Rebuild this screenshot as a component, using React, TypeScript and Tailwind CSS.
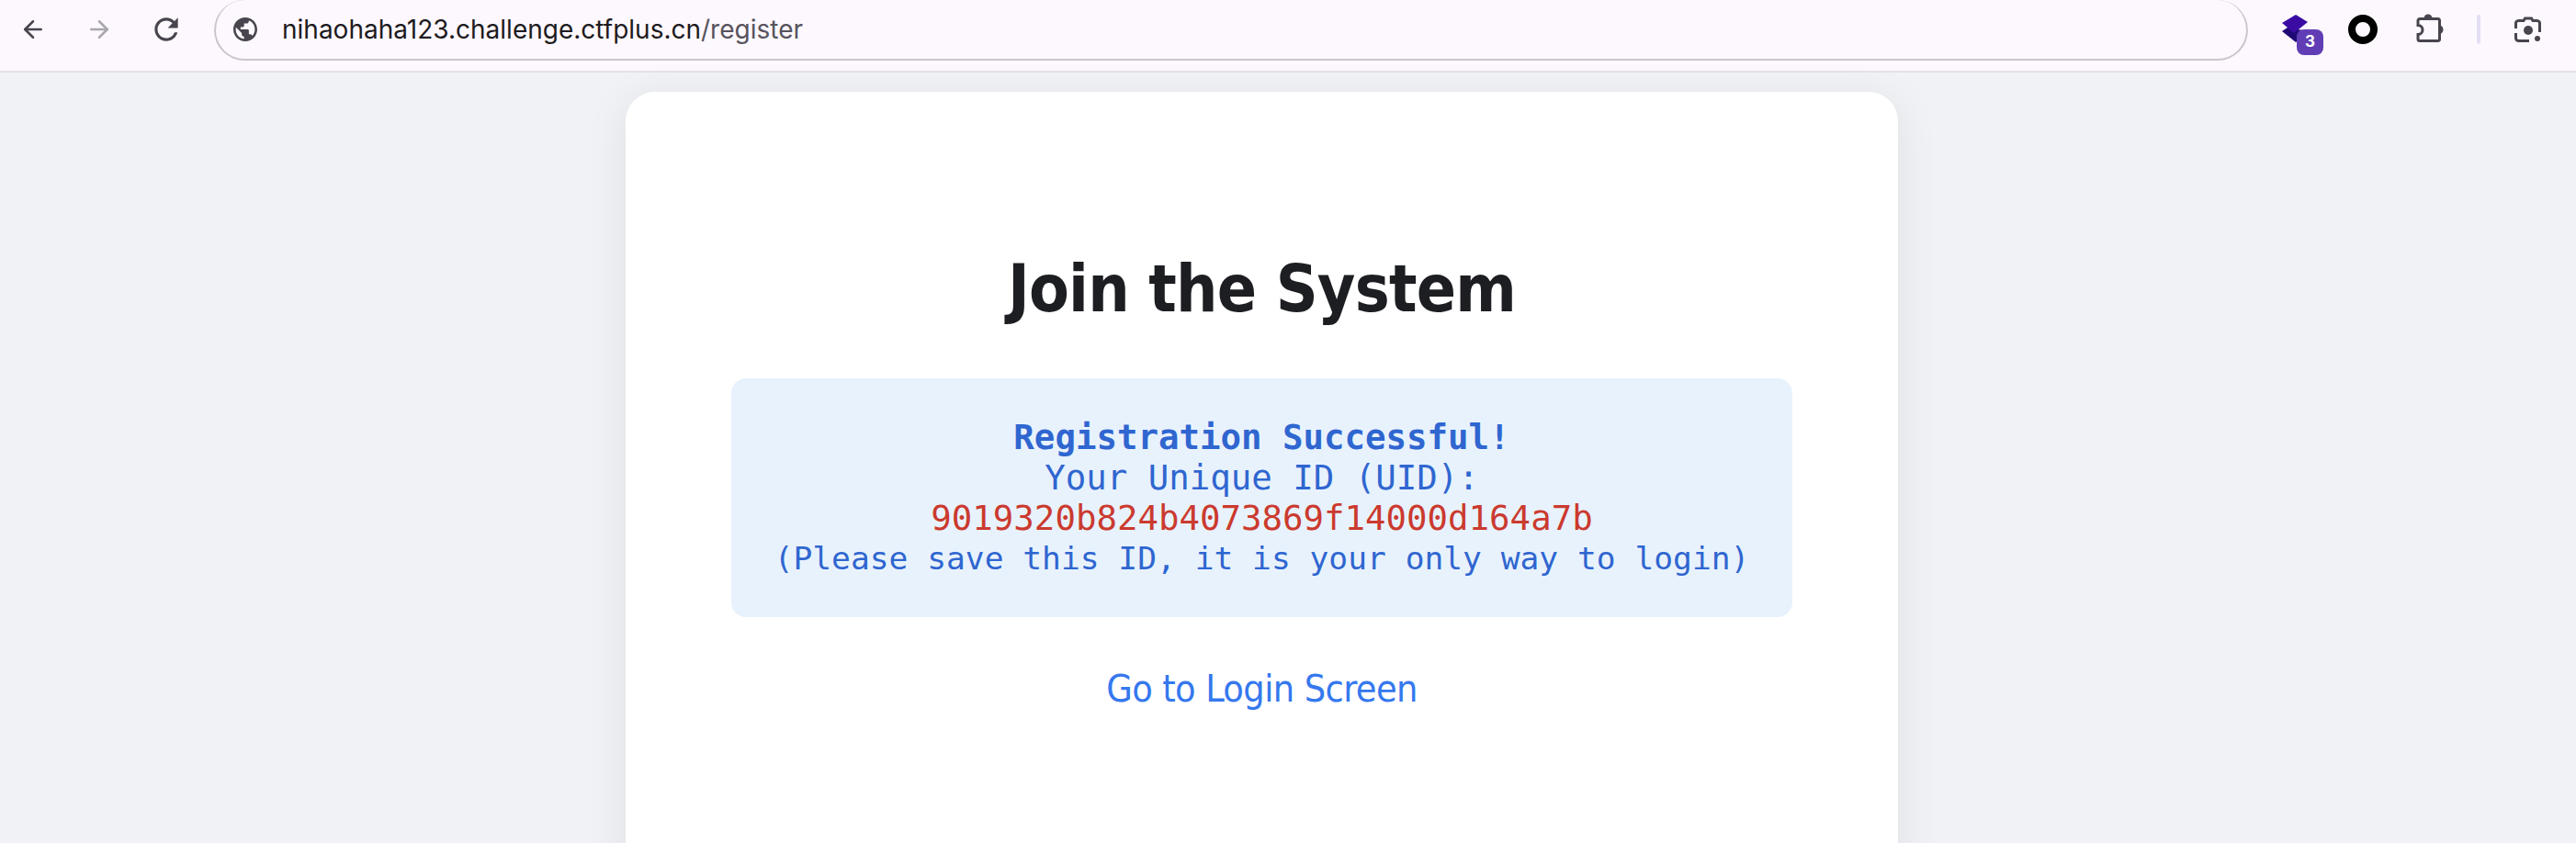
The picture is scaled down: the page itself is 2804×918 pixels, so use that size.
import { ArrowLeft, ArrowRight } from 'lucide-react'

function Toolbar() {
  return (
    <div className="h-[79px] shrink-0 flex items-start bg-[#fdf8fe] border-b-2 border-[#e3e2e7] [font-family:Inter,sans-serif]">
      <div className="flex items-center gap-[42px] pl-[21px] pt-[13px] w-[233px]">
        <ArrowLeft className="w-[30px] h-[30px] text-[#48454f]" strokeWidth={2} />
        <ArrowRight className="w-[30px] h-[30px] text-[#a9a6ae]" strokeWidth={2} />
        <svg viewBox="0 0 24 24" className="w-[38px] h-[38px] shrink-0 -ml-[3px] text-[#48454f]" fill="currentColor">
          <path d="M17.65 6.35C16.2 4.9 14.21 4 12 4c-4.42 0-7.99 3.58-7.99 8s3.57 8 7.99 8c3.73 0 6.84-2.55 7.73-6h-2.08c-.82 2.33-3.04 4-5.65 4-3.31 0-6-2.69-6-6s2.69-6 6-6c1.66 0 3.14.69 4.22 1.78L13 11h7V4l-2.35 2.35z" />
        </svg>
      </div>

      {/* Address bar */}
      <div className="w-[2214px] h-[66px] flex items-center border-2 border-t-0 border-[#c9c6cc] rounded-[33px] pl-[19px]">
        <svg viewBox="2 2 20 20" className="w-[26px] h-[26px] text-[#48454f]" fill="currentColor">
          <path d="M12 2C6.48 2 2 6.48 2 12s4.48 10 10 10 10-4.48 10-10S17.52 2 12 2zm-1 17.93c-3.95-.49-7-3.85-7-7.93 0-.62.08-1.21.21-1.79L9 15v1c0 1.1.9 2 2 2v1.93zm6.9-2.54c-.26-.81-1-1.39-1.9-1.39h-1v-3c0-.55-.45-1-1-1H8v-2h2c.55 0 1-.45 1-1V7h2c1.1 0 2-.9 2-2v-.41c2.93 1.19 5 4.06 5 7.41 0 2.08-.8 3.97-2.1 5.39z" />
        </svg>
        <span className="ml-[27px] text-[28px] leading-none text-[#1d1b20] whitespace-nowrap">
          nihaohaha123.challenge.ctfplus.cn<span className="text-[#57535d]">/register</span>
        </span>
      </div>

      {/* Extensions */}
      <div className="relative flex-1 h-[66px]">
        <svg viewBox="0 0 32 30" className="absolute left-[37px] top-[16px] w-[32px] h-[30px]">
          <path d="M0 18 6 14 28 18 15 30Z" fill="#1f0a75" />
          <path d="M15 0 28 8 13 20 0 9Z" fill="#3a0ca3" />
        </svg>
        <div className="absolute left-[53px] top-[32px] w-[29px] h-[28px] rounded-[8px] bg-[#613db5] text-white text-[17px] font-bold flex items-center justify-center">3</div>
        <div className="absolute left-[109px] top-[16px] w-[32px] h-[32px] rounded-full border-[8px] border-black" />
        <svg viewBox="0 0 34 34" className="absolute left-[182px] top-[13px] w-[34px] h-[34px] text-[#48454f]" fill="currentColor">
          <path d="M5 7.500H25A1.500 1.500 0 0 1 26.500 9V30A1.500 1.500 0 0 1 25 31.500H5A2 2 0 0 1 3 29.500V24.500C6 24.500 8 22 8 19.500C8 17 6 14.500 3 14.500V9.500A2 2 0 0 1 5 7.500Z" fill="none" stroke="currentColor" strokeWidth="3" />
          <path d="M9.500 7A4.500 4.500 0 0 1 18.500 7Z" />
          <path d="M27 14.500A5 5 0 0 1 27 24Z" />
        </svg>
        <div className="absolute left-[249px] top-[16px] w-[4px] h-[32px] rounded-sm bg-[#e4dff6]" />
        <svg viewBox="0 0 30 30" className="absolute left-[289px] top-[18px] w-[30px] h-[30px] text-[#48454f]" fill="none" stroke="currentColor" strokeWidth="3">
          <path d="M2.500 13V8A3 3 0 0 1 5.500 4.500H11L12.500 2H19.500L21 4.500H25.500A3 3 0 0 1 28.500 8V17" />
          <path d="M2.500 18V23.500A3 3 0 0 0 5.500 26.500H17" />
          <circle cx="16" cy="15" r="5" fill="currentColor" stroke="none" />
          <circle cx="26" cy="24" r="3" fill="currentColor" stroke="none" />
        </svg>
      </div>
    </div>
  )
}

export default function App() {
  return (
    <div className="h-[918px] overflow-hidden flex flex-col bg-[#f0f2f5]">
      <Toolbar />
      <div className="pt-[21px] pl-[681px]">
        <div className="w-[1385px] h-[860px] bg-white rounded-[32px] shadow-[0_8px_48px_rgba(0,0,0,0.08)] px-[115px] pt-[173px] text-center [font-family:'DejaVu_Sans_Condensed','DejaVu_Sans',sans-serif]">
          <h1 className="text-[71px] leading-[84px] font-bold tracking-[-0.8px] text-[#1c1e21]">Join the System</h1>
          <div className="mt-[55px] rounded-[16px] bg-[#e8f2fd] py-[42px] text-[37.4px] leading-[44px] text-[#2f66d0] [font-family:'DejaVu_Sans_Mono',monospace]">
            <div className="font-bold">Registration Successful!</div>
            <div>Your Unique ID (UID):</div>
            <div className="text-[#cb3a2e]">9019320b824b4073869f14000d164a7b</div>
            <div className="text-[34.6px]">(Please save this ID, it is your only way to login)</div>
          </div>
          <a className="inline-block mt-[53px] text-[41px] leading-[50px] tracking-[-0.6px] text-[#3578ee]">Go to Login Screen</a>
        </div>
      </div>
    </div>
  )
}
